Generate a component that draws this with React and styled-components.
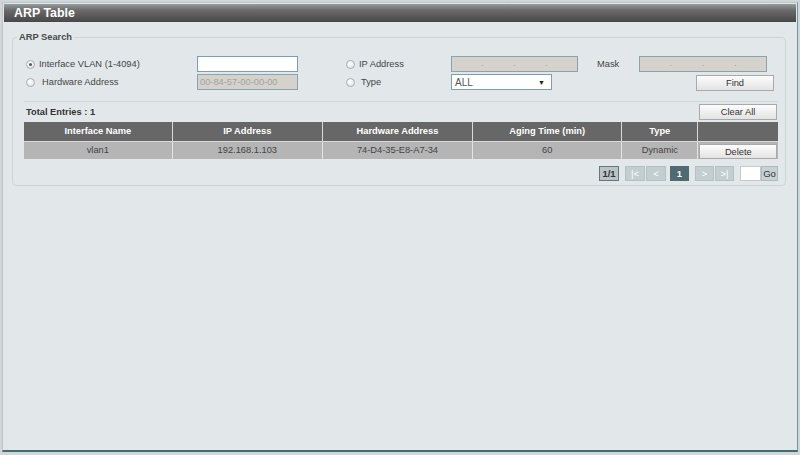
import styled, { createGlobalStyle } from 'styled-components';

const GlobalStyle = createGlobalStyle`
  html, body {
    margin: 0;
    padding: 0;
    background: #d3d5d6;
    font-family: 'Liberation Sans', Arial, sans-serif;
    font-size: 9.3px;
    color: #333;
  }
  * {
    box-sizing: border-box;
  }
`;

const Frame = styled.div`
  margin: 2px 2px 0 2px;
  height: 450px;
  padding: 1px;
  background: #e2e8ea;
  border: 1px solid #bcc6c9;
  border-top-color: #a7cdd8;
  border-right-color: #6e98a2;
  border-bottom: 2px solid #3f6b74;
`;

const TitleBar = styled.div`
  height: 18px;
  padding-left: 10px;
  display: flex;
  align-items: center;
  background: linear-gradient(#9a9a9a 0%, #6a6a6a 35%, #474747 100%);
  color: #fff;
  font-size: 12.4px;
  font-weight: bold;
`;

const Fieldset = styled.fieldset`
  margin: 8px 10px 0 8px;
  padding: 0 7px 4px 11px;
  border: 1px solid #cdd4d7;
  border-radius: 4px;
  min-width: 0;
`;

const Legend = styled.legend`
  margin-left: -7px;
  padding: 0 2px;
  line-height: 14px;
  font-weight: bold;
  color: #4a4a4a;
`;

const SearchGrid = styled.div`
  display: grid;
  grid-template-columns: 173px 101px 46px 107px 127px 19px 42px 1fr;
  grid-auto-rows: 16px;
  row-gap: 2px;
  align-items: center;
  margin-top: 12px;
`;

const RadioLabel = styled.label`
  display: flex;
  align-items: center;
  gap: 4px;
  padding-left: 2px;
  color: #444;
  white-space: nowrap;

  span {
    padding-left: ${({ indent }) => indent || 0}px;
  }
`;

const Radio = styled.input.attrs({ type: 'radio' })`
  appearance: none;
  margin: 0;
  width: 9px;
  height: 9px;
  border: 1px solid #a9adb0;
  border-radius: 50%;
  background: radial-gradient(circle at 40% 35%, #ffffff 0%, #e6e8e9 70%);
  display: grid;
  place-items: center;

  &:checked::after {
    content: '';
    width: 3px;
    height: 3px;
    border-radius: 50%;
    background: #555;
  }
`;

const TextInput = styled.input`
  height: 16px;
  width: 101px;
  margin: 0;
  padding: 0 2px;
  font: inherit;
  color: #a3a3a3;
  border: 1px solid ${({ disabled }) => (disabled ? '#8aa3b4' : '#7f9db9')};
  background: ${({ disabled }) => (disabled ? '#d5d2cb' : '#ffffff')};
  outline: none;
`;

const IpField = styled.div`
  display: flex;
  align-items: center;
  height: 16px;
  width: ${({ width }) => width}px;
  border: 1px solid #8aa3b4;
  background: #d5d2cb;
`;

const Octet = styled.span`
  flex: 1;
`;

const Dot = styled.span`
  width: 3px;
  color: #8c8c8c;
  font-size: 8px;
  line-height: 1;
  text-align: center;
`;

const PlainLabel = styled.span`
  color: #444;
`;

const Select = styled.div`
  display: flex;
  align-items: center;
  justify-content: space-between;
  width: 101px;
  height: 16px;
  padding: 0 6px 0 3px;
  border: 1px solid #7f9db9;
  background: #fff;
  color: #555;
  font-size: 10px;

  i {
    font-style: normal;
    font-size: 7px;
    color: #222;
  }
`;

const Button = styled.button`
  height: ${({ h }) => h || 16}px;
  width: 78px;
  margin: 0;
  padding: 0;
  font: inherit;
  font-weight: normal;
  color: #333;
  border: 1px solid #a9a9a9;
  background: linear-gradient(#fdfdfd, #e3e3e3);
  cursor: pointer;
`;

const FindButton = styled(Button)`
  justify-self: end;
  margin-right: 4px;
  margin-top: 1px;
`;

const Results = styled.div`
  margin-top: 11px;
  border-top: 1px solid #cfd6d9;
  padding-top: 2px;
`;

const ResultsBar = styled.div`
  display: flex;
  align-items: center;
  justify-content: space-between;
  height: 16px;
  padding-left: 2px;
  color: #333;

  strong {
    font-weight: bold;
  }

  button {
    margin-right: 1px;
  }
`;

const Table = styled.table`
  margin-top: 2px;
  width: 100%;
  border-collapse: collapse;
  table-layout: fixed;
  font-size: 9.3px;
`;

const Th = styled.th`
  height: 19px;
  padding: 0;
  background: #676767;
  color: #fff;
  font-weight: bold;
  text-align: center;
  border-left: 1px solid #d9d9d9;

  &:first-child {
    border-left: none;
  }
`;

const Td = styled.td`
  height: 18px;
  padding: 0;
  background: #b5b5b5;
  color: #444;
  text-align: center;
  border-left: 1px solid #e3e3e3;
  border-top: 1px solid #dadada;
  vertical-align: middle;

  &:first-child {
    border-left: none;
  }
`;

const ActionTd = styled(Td)`
  vertical-align: bottom;
  padding-left: 1px;

  button {
    display: block;
  }
`;

const Pager = styled.div`
  display: flex;
  justify-content: flex-end;
  align-items: center;
  gap: 6px;
  margin-top: 7px;
  height: 15px;
`;

const PagerGroup = styled.div`
  display: flex;
  gap: ${({ gap }) => gap || 0}px;
`;

const PageBox = styled.span`
  display: flex;
  align-items: center;
  justify-content: center;
  width: ${({ w }) => w || 20}px;
  height: 15px;
  font-weight: bold;
  font-size: 9.5px;
  ${({ variant }) =>
    variant === 'count'
      ? 'background: #b9c4c7; border: 1px solid #66767a; color: #333;'
      : variant === 'active'
      ? 'background: #4f6a70; border: 1px solid #4f6a70; color: #fff; margin-left: -2px;'
      : 'background: #c3ced1; border: 1px solid #b4c1c4; color: #fff; font-weight: normal;'}
`;

const GoInput = styled.input`
  width: 21px;
  height: 15px;
  margin: 0;
  padding: 0;
  border: 1px solid #c3cbcd;
  background: #fff;
  outline: none;
`;

const GoButton = styled.span`
  display: flex;
  align-items: center;
  justify-content: center;
  width: 17px;
  height: 15px;
  background: #c7d1d4;
  border: 1px solid #aebbbe;
  color: #333;
  font-size: 9.5px;
`;

const columns = [
  { label: 'Interface Name', width: 148 },
  { label: 'IP Address', width: 150 },
  { label: 'Hardware Address', width: 150 },
  { label: 'Aging Time (min)', width: 149 },
  { label: 'Type', width: 76 },
  { label: '', width: 80 },
];

const rows = [
  { name: 'vlan1', ip: '192.168.1.103', mac: '74-D4-35-E8-A7-34', aging: '60', type: 'Dynamic' },
];

function IpBox({ width }) {
  return (
    <IpField width={width}>
      <Octet />
      <Dot>.</Dot>
      <Octet />
      <Dot>.</Dot>
      <Octet />
      <Dot>.</Dot>
      <Octet />
    </IpField>
  );
}

export default function App() {
  return (
    <>
      <GlobalStyle />
      <Frame>
        <TitleBar>ARP Table</TitleBar>
        <Fieldset>
          <Legend>ARP Search</Legend>
          <SearchGrid>
            <RadioLabel>
              <Radio name="by" defaultChecked />
              <span>Interface VLAN (1-4094)</span>
            </RadioLabel>
            <TextInput />
            <span />
            <RadioLabel>
              <Radio name="by" />
              <span indent={2}>IP Address</span>
            </RadioLabel>
            <IpBox width={127} />
            <span />
            <PlainLabel>Mask</PlainLabel>
            <IpBox width={128} />

            <RadioLabel indent={3}>
              <Radio name="by" />
              <span>Hardware Address</span>
            </RadioLabel>
            <TextInput disabled defaultValue="00-84-57-00-00-00" />
            <span />
            <RadioLabel indent={2}>
              <Radio name="by" />
              <span>Type</span>
            </RadioLabel>
            <Select>
              ALL
              <i>▼</i>
            </Select>
            <span />
            <span />
            <FindButton>Find</FindButton>
          </SearchGrid>

          <Results>
            <ResultsBar>
              <strong>Total Entries : 1</strong>
              <Button>Clear All</Button>
            </ResultsBar>
            <Table>
              <colgroup>
                {columns.map((c, i) => (
                  <col key={i} style={{ width: c.width }} />
                ))}
              </colgroup>
              <thead>
                <tr>
                  {columns.map((c, i) => (
                    <Th key={i}>{c.label}</Th>
                  ))}
                </tr>
              </thead>
              <tbody>
                {rows.map((r) => (
                  <tr key={r.mac}>
                    <Td>{r.name}</Td>
                    <Td>{r.ip}</Td>
                    <Td>{r.mac}</Td>
                    <Td>{r.aging}</Td>
                    <Td>{r.type}</Td>
                    <ActionTd>
                      <Button h={15}>Delete</Button>
                    </ActionTd>
                  </tr>
                ))}
              </tbody>
            </Table>
            <Pager>
              <PageBox variant="count">1/1</PageBox>
              <PagerGroup gap={1}>
                <PageBox>|&lt;</PageBox>
                <PageBox>&lt;</PageBox>
              </PagerGroup>
              <PageBox variant="active" w={19}>1</PageBox>
              <PagerGroup gap={1}>
                <PageBox w={19}>&gt;</PageBox>
                <PageBox w={19}>&gt;|</PageBox>
              </PagerGroup>
              <PagerGroup>
                <GoInput />
                <GoButton>Go</GoButton>
              </PagerGroup>
            </Pager>
          </Results>
        </Fieldset>
      </Frame>
    </>
  );
}
